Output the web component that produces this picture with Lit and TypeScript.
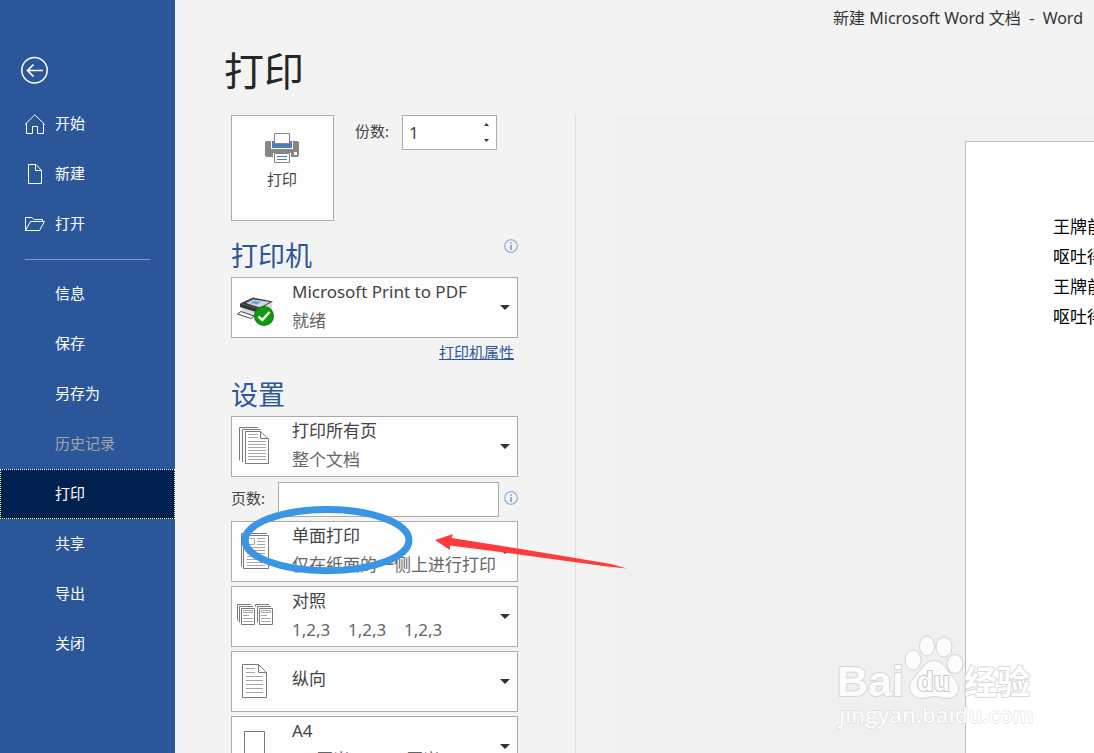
import { LitElement, html, css, svg, nothing } from "lit";
import { customElement, property } from "lit/decorators.js";
import { classMap } from "lit/directives/class-map.js";

const lines = (x1: number, x2: number, ys: number[]) =>
  svg`<path stroke="#a6a6a6" d=${ys.map((y) => `M${x1} ${y}H${x2}`).join("")}></path>`;

const navIcons: Record<string, unknown> = {
  home: svg`<path d="M1 11.5 10.8 1.8 20.8 11.5M2.5 10.5V20.5H8.5V13.5H13.5V20.5H19.5V10.5"></path>`,
  file: svg`<path d="M4.5 1.5H12L17.5 7.5V20.5H4.5ZM11.5 1.5V7.5H17.5"></path>`,
  folder: svg`<path d="M1.5 17.5V4.5H8L10 6.5H18.5V8.5M1.5 17.5 6.5 8.5H20.5L15.5 17.5Z"></path>`,
};

const optionIcons: Record<string, unknown> = {
  printer: svg`
    <g stroke="none">
      <path fill="#d9dde2" d="M10 26V33L26 41 40 34V24Z"></path>
      <path fill="#3c4044" d="M8 25.5 21 19.5 41 23.5 27 31Z"></path>
      <path fill="#cfd6dd" d="M14 25 21.5 21.3 38 24 28 29.5Z"></path>
      <path fill="#66a5dc" d="M18 24.6 22.5 22.5 29 24 24.5 26.6Z"></path>
      <path fill="#2f3439" d="M8 25.500 27 31V35L8 29Z"></path>
      <path fill="#fafafa" stroke="#45494e" d="M9 33.5 5.5 36 19 40.5 22 38Z"></path>
      <circle cx="32" cy="38" r="10" fill="#0a7a0a"></circle>
      <circle cx="32" cy="38" r="9" fill="#0c9c0c"></circle>
    </g>
    <path stroke="#fff" stroke-width="2.6" d="M26.5 38.5 30.3 42 37.5 34"></path>`,
  pages: svg`
    <path d="M7.5 43.5V10.5H26M10.5 45V12.5H28.5"></path>
    <path fill="#fff" d="M13.5 14.5H28.5L36.5 22V46.5H13.5ZM28.5 14.5V21.5H36.5"></path>
    ${lines(16, 26, [17.5, 20.5])}${lines(16, 34, [24.5, 27.5, 30.5, 33.5, 36.5, 39.5, 42.5])}`,
  single: svg`
    <path d="M9.5 44.5V11.5H35"></path>
    <path fill="#fff" d="M11.5 13.5H36.5V46.5H11.5Z"></path>
    <path stroke="#a6a6a6" d="M16.5 16.5H22.5V22.5H16.5Z"></path>
    ${lines(25, 33, [16.5, 19.5, 22.5])}${lines(15, 33, [25.5, 28.5, 31.5, 34.5, 37.5, 40.5, 43.5])}`,
  collate: svg`
    <path d="M5.5 33.5V17.5H19M7.5 35.5V19.5H21M23.5 19.5V17.5H37M25.5 35.5V19.5H39"></path>
    <path fill="#fff" d="M9.5 21.5H22.5V37.5H9.5ZM27.5 21.5H40.5V37.5H27.5Z"></path>
    <path stroke="#a6a6a6" d="M11.5 23.5H20.5V25.5H11.5ZM29.5 23.5H38.5V25.5H29.5Z"></path>
    ${lines(11, 17, [28.5])}${lines(11, 21, [31.5, 34.5])}${lines(29, 35, [28.5])}${lines(29, 39, [31.5, 34.5])}`,
  portrait: svg`
    <path fill="#fff" d="M10.5 12.5H26.5L34.5 20.5V45.5H10.5ZM26.5 12.5V20.5H34.5"></path>
    ${lines(14, 23, [16.5, 20.5])}${lines(14, 31, [24.5, 28.5, 32.5, 36.5, 40.5])}`,
  paper: svg`<path fill="#fff" d="M12.5 14.5H32.5V44.5H12.5Z"></path>`,
};

const infoIcon = html`<svg width="14" height="14" viewBox="0 0 14 14" fill="none" aria-hidden="true">
  <circle cx="7" cy="7" r="6.3" stroke="#8fb0dc" stroke-width="1.2"></circle>
  <path stroke="#7f9cc9" stroke-width="1.6" d="M7 6V11M7 3.2V4.8"></path>
</svg>`;

@customElement("print-option")
export class PrintOption extends LitElement {
  @property() icon = "";
  @property() label = "";
  @property() value = "";
  @property() detail = "";

  static styles = css`
    :host {
      display: block;
    }
    .box {
      display: grid;
      grid-template-columns: 60px 1fr 26px;
      grid-template-rows: 28px 31px;
      border: 1px solid #ababab;
      background: #fdfdfd;
      color: #666;
      font-size: 17px;
      line-height: 30px;
    }
    .choice {
      grid-area: 1 / 1 / 3 / 4;
      appearance: none;
      min-width: 0;
      margin: 0;
      border: 0;
      border-radius: 0;
      padding: 0 26px 31px 60px;
      background: transparent;
      color: #444;
      font: inherit;
      line-height: 28px;
    }
    .choice.alone {
      padding-bottom: 6px;
    }
    .icon {
      grid-area: 1 / 1 / 3 / 2;
      pointer-events: none;
    }
    .detail {
      grid-area: 2 / 2 / 3 / 4;
      pointer-events: none;
      white-space: pre;
    }
    .arrow {
      grid-area: 1 / 3 / 3 / 4;
      align-self: center;
      margin-left: 9px;
      pointer-events: none;
    }
  `;

  render() {
    return html`<div class="box">
      <select class=${classMap({ choice: true, alone: !this.detail })} aria-label=${this.label}>
        <option>${this.value}</option>
      </select>
      <svg class="icon" width="60" height="59" viewBox="0 0 60 59" fill="none" stroke="#7a7a7a" aria-hidden="true">
        ${optionIcons[this.icon]}
      </svg>
      ${this.detail ? html`<span class="detail">${this.detail}</span>` : nothing}
      <svg class="arrow" width="10" height="5" viewBox="0 0 10 5" aria-hidden="true">
        <path fill="#333" d="M0 0H10L5 5Z"></path>
      </svg>
    </div>`;
  }
}

@customElement("app-root")
export class AppRoot extends LitElement {
  static styles = css`
    :host {
      display: flex;
      position: relative;
      height: 100vh;
      overflow: hidden;
      background: #f3f3f3;
      color: #444;
      font-family: "Noto Sans", "Noto Sans CJK SC", sans-serif;
      font-size: 15px;
    }
    * {
      box-sizing: border-box;
    }
    svg {
      display: block;
      flex: none;
    }
    .sidebar {
      flex: none;
      width: 175px;
      padding-top: 41px;
      background: #2b579a;
    }
    .back {
      display: flex;
      align-items: center;
      height: 58px;
      border: 0;
      padding: 0 20px;
      background: none;
    }
    .item {
      display: flex;
      align-items: center;
      gap: 9px;
      width: 100%;
      height: 50px;
      border: 1px solid transparent;
      padding: 0 0 0 54px;
      background: none;
      color: #fff;
      font: inherit;
      text-align: left;
    }
    .item span {
      padding-bottom: 4px;
    }
    .item.with-icon {
      padding-left: 23px;
    }
    .item:disabled {
      color: #a6a6a6;
    }
    .item.current {
      border: 1px dotted #fff;
      background: #002050;
    }
    .rule {
      height: 1px;
      margin: 10px 25px 9px;
      border: 0;
      background: #7ba0d4;
    }
    .main {
      flex: 1;
      display: flex;
      flex-direction: column;
      min-width: 0;
    }
    .titlebar {
      padding-right: 11px;
      color: #333;
      font-size: 16px;
      line-height: 36px;
      text-align: right;
      white-space: pre;
    }
    .title {
      margin: 0 0 9px 49px;
      color: #262626;
      font-size: 40px;
      font-weight: 400;
      line-height: 70px;
    }
    .columns {
      flex: 1;
      display: flex;
      min-height: 0;
    }
    .settings {
      flex: none;
      width: 401px;
      border-right: 1px solid #dcdcdc;
      padding: 0 57px 0 56px;
      overflow: hidden;
    }
    .launch {
      display: flex;
      align-items: flex-start;
    }
    .print {
      display: flex;
      flex-direction: column;
      align-items: center;
      gap: 4px;
      width: 103px;
      height: 106px;
      border: 1px solid #ababab;
      padding: 16px 1px 0 0;
      background: #fdfdfd;
      color: #444;
      font: inherit;
    }
    .copies-label {
      width: 68px;
      padding-left: 21px;
      line-height: 33px;
      white-space: nowrap;
    }
    .spin {
      display: flex;
      width: 95px;
      height: 35px;
      border: 1px solid #ababab;
      background: #fff;
    }
    .spin input {
      flex: 1;
      min-width: 0;
      border: 0;
      padding: 0 0 0 6px;
      background: none;
      color: #444;
      font: inherit;
      font-size: 17px;
      appearance: textfield;
    }
    .spin input::-webkit-inner-spin-button {
      appearance: none;
    }
    .steps {
      display: grid;
      width: 20px;
    }
    .steps button {
      display: grid;
      place-items: center;
      border: 0;
      padding: 0;
      background: none;
    }
    .section {
      display: flex;
      justify-content: space-between;
      height: 40px;
      margin-top: 10px;
    }
    .section.first {
      margin-top: 16px;
    }
    .section h2 {
      margin: 0;
      color: #2b579a;
      font-size: 27px;
      font-weight: 400;
      line-height: 37px;
    }
    .info {
      width: 14px;
      height: 14px;
      border: 0;
      padding: 0;
      background: none;
    }
    .section .info {
      margin-top: 2px;
    }
    .properties {
      padding-right: 4px;
      line-height: 28px;
      text-align: right;
    }
    .properties a {
      color: #2b579a;
    }
    .pages {
      display: flex;
      align-items: center;
      margin: 5px 0 4px;
    }
    .pages label {
      width: 47px;
      padding-bottom: 4px;
    }
    .pages input {
      flex: 1;
      min-width: 0;
      height: 35px;
      margin-right: 5px;
      border: 1px solid #ababab;
      padding: 0 6px;
      background: #fff;
      font: inherit;
    }
    .pages .info {
      margin-bottom: 3px;
    }
    .options {
      display: grid;
      gap: 4px;
    }
    .marks {
      position: absolute;
      left: 231px;
      top: 500px;
      pointer-events: none;
    }
    .preview {
      flex: 1;
      min-width: 0;
      margin-left: 39px;
      padding: 26px 0 0 350px;
      overflow: hidden;
      background: #f0f0f0;
    }
    .paper {
      width: 640px;
      height: 100%;
      border: 1px solid #c0c0c0;
      border-width: 1px 0 0 1px;
      padding: 69px 87px;
      background: #fff;
      color: #000;
      font-family: "Noto Sans CJK SC", sans-serif;
      font-size: 17px;
      line-height: 30px;
    }
    .paper p {
      margin: 0;
    }
    .watermark {
      position: absolute;
      right: 54px;
      bottom: 20px;
      pointer-events: none;
    }
    .latin {
      font-family: "Liberation Sans", sans-serif;
      font-weight: 700;
    }
    .han {
      font-family: "Noto Sans CJK SC", sans-serif;
      font-weight: 700;
    }
    .site {
      font-family: "Open Sans", sans-serif;
      font-weight: 600;
    }
  `;

  private item(label: string, icon = "", state = "") {
    return html`<button
      class=${classMap({ item: true, "with-icon": !!icon, current: state === "current" })}
      ?disabled=${state === "disabled"}
      aria-current=${state === "current" ? "page" : nothing}
    >
      ${icon
        ? html`<svg width="22" height="22" viewBox="0 0 22 22" fill="none" stroke="#fff" aria-hidden="true">${navIcons[icon]}</svg>`
        : nothing}<span>${label}</span>
    </button>`;
  }

  render() {
    return html`
      <nav class="sidebar">
        <button class="back" aria-label="返回">
          <svg width="28" height="28" viewBox="0 0 28 28" fill="none" stroke="#fff" aria-hidden="true">
            <circle cx="14.5" cy="14.3" r="12.7" stroke-width="1.5"></circle>
            <path stroke-width="1.7" d="M23 14.5H8M13.5 8.5 7.5 14.5 13.5 20.5"></path>
          </svg>
        </button>
        ${this.item("开始", "home")}${this.item("新建", "file")}${this.item("打开", "folder")}
        <hr class="rule" />
        ${this.item("信息")}${this.item("保存")}${this.item("另存为")}
        ${this.item("历史记录", "", "disabled")}${this.item("打印", "", "current")}
        ${this.item("共享")}${this.item("导出")}${this.item("关闭")}
      </nav>
      <main class="main">
        <div class="titlebar">新建 Microsoft Word 文档  -  Word</div>
        <h1 class="title">打印</h1>
        <div class="columns">
          <section class="settings">
            <div class="launch">
              <button class="print">
                <svg width="36" height="32" viewBox="0 0 36 32" aria-hidden="true">
                  <rect x="1" y="9" width="34" height="16" rx="2" fill="#868686"></rect>
                  <path fill="#fff" d="M7 9H29V17H7Z"></path>
                  <path fill="#4a7ebb" d="M8 9H28V16H8Z"></path>
                  <path fill="#fff" stroke="#868686" d="M10.5 1.5H25.5V11.5H10.5Z"></path>
                  <path fill="#fff" d="M9 21H27V25H9ZM30 20H33V23H30Z"></path>
                  <path fill="#fff" stroke="#868686" d="M10.5 21.5H25.5V30.5H10.5Z"></path>
                  <path stroke="#4a7ebb" d="M13 24.5H23M13 27.5H23"></path>
                </svg>
                打印
              </button>
              <label class="copies-label" for="copies">份数:</label>
              <div class="spin">
                <input id="copies" type="number" min="1" value="1" />
                <div class="steps">
                  <button aria-label="增加"><svg width="5" height="3" viewBox="0 0 5 3"><path fill="#333" d="M0 3H5L2.5 0Z"></path></svg></button>
                  <button aria-label="减少"><svg width="5" height="3" viewBox="0 0 5 3"><path fill="#333" d="M0 0H5L2.5 3Z"></path></svg></button>
                </div>
              </div>
            </div>

            <div class="section first">
              <h2>打印机</h2>
              <button class="info" aria-label="打印机信息">${infoIcon}</button>
            </div>
            <print-option icon="printer" label="打印机" value="Microsoft Print to PDF" detail="就绪"></print-option>
            <div class="properties"><a href="#properties">打印机属性</a></div>

            <div class="section"><h2>设置</h2></div>
            <print-option icon="pages" label="打印范围" value="打印所有页" detail="整个文档"></print-option>
            <div class="pages">
              <label for="pages">页数:</label>
              <input id="pages" type="text" />
              <button class="info" aria-label="页数信息">${infoIcon}</button>
            </div>
            <div class="options">
              <print-option icon="single" label="单双面" value="单面打印" detail="仅在纸面的一侧上进行打印"></print-option>
              <print-option icon="collate" label="对照" value="对照" detail="1,2,3    1,2,3    1,2,3"></print-option>
              <print-option icon="portrait" label="方向" value="纵向"></print-option>
              <print-option icon="paper" label="纸张" value="A4" detail="21 厘米 x 29.7 厘米"></print-option>
            </div>
          </section>
          <section class="preview">
            <article class="paper">
              <p>王牌前</p>
              <p>呕吐得</p>
              <p>王牌前</p>
              <p>呕吐得</p>
            </article>
          </section>
        </div>
      </main>
      <svg class="marks" width="400" height="80" viewBox="0 0 400 80" aria-hidden="true">
        <ellipse cx="96" cy="40.2" rx="82" ry="30.6" fill="none" stroke="#3a95e4" stroke-width="7"></ellipse>
        <path fill="#ff3a3a" d="M204 40 222 34 220.5 38 290 49 380 64 396 68.5 376 66.5 288 54.5 219 45.5V50Z"></path>
      </svg>
      <svg class="watermark" width="206" height="100" viewBox="0 0 206 100" fill="#fff" stroke="#d0d0d0" stroke-width="2" paint-order="stroke" opacity="0.8" aria-hidden="true">
        <text class="latin" x="3" y="63" font-size="43">Bai</text>
        <ellipse cx="79" cy="27" rx="7.5" ry="9.5"></ellipse>
        <ellipse cx="93" cy="13" rx="7" ry="9.5"></ellipse>
        <ellipse cx="110" cy="14" rx="7.5" ry="9.5"></ellipse>
        <ellipse cx="121" cy="31" rx="7.5" ry="9"></ellipse>
        <path d="M100 28C92 28 88 36 84 41S76 48 76 54 80 65 88 65C93 65 95 63 100 63S108 65 113 65C121 65 125 60 124 54S118 44 115 40 108 28 100 28Z"></path>
        <text class="latin" x="83" y="58" font-size="27" stroke="#bdbdbd">du</text>
        <text class="han" x="130" y="61" font-size="33">经验</text>
        <text class="site" x="5" y="90" font-size="22" stroke-width="1">jingyan.baidu.com</text>
      </svg>
    `;
  }
}
